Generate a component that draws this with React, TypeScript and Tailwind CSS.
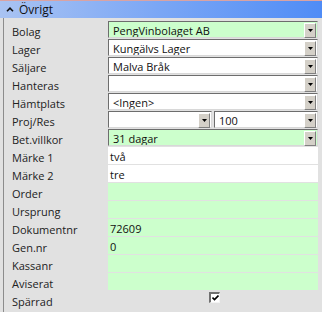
// "Övrigt" property panel, WinForms-style grid.

const font = { fontFamily: '"Open Sans", "Noto Sans", Arial, sans-serif' };

function Arrow() {
  return (
    <div className="w-[12px] h-[15px] my-px mr-px bg-[#d4d0c8] border-t border-l border-t-white border-l-white border-r border-b border-r-[#808080] border-b-[#808080] flex items-center justify-center">
      <svg width="5" height="3" viewBox="0 0 5 3">
        <path d="M0 0h5L2.5 3z" fill="#000" />
      </svg>
    </div>
  );
}

function Combo({ value, green }: { value?: string; green?: boolean }) {
  return (
    <div
      className={`flex-1 h-[17px] flex items-stretch border-t border-l border-t-[#6d6d6d] border-l-[#6d6d6d] border-r border-b border-r-[#d8d8d8] border-b-[#d8d8d8] ${
        green ? "bg-[#ccffcc]" : "bg-white"
      }`}
    >
      <span className="flex-1 pl-[4px] pt-[1px] text-[11px] leading-[16px] text-[#111] truncate">
        {value}
      </span>
      <Arrow />
    </div>
  );
}

function Row({ label, children }: { label: string; children?: React.ReactNode }) {
  return (
    <div className="flex h-[18px] items-start">
      <div className="w-[104px] pl-[8px] pt-[3px] text-[11px] leading-[16px] text-[#222] whitespace-nowrap">
        {label}
      </div>
      <div className="flex-1 flex gap-[2px] mr-[4px]">{children}</div>
    </div>
  );
}

function Plain({ value, green }: { value?: string; green?: boolean }) {
  return (
    <div
      className={`flex-1 h-[17px] pl-[2px] pt-[2px] text-[11px] leading-[15px] text-[#111] overflow-hidden ${
        green ? "bg-[#ccffcc]" : "bg-white"
      }`}
    >
      {value}
    </div>
  );
}

export default function App() {
  return (
    <div className="w-[322px] h-[312px] bg-[#e1e1e1] overflow-hidden" style={font}>
      <div className="h-[18px] border-t border-t-[#d9a3a3] bg-gradient-to-r from-[#a9c3f2] via-[#7aa6f5] to-[#4f8cf6] flex items-center">
        <svg width="8" height="5" viewBox="0 0 8 5" className="ml-[6px] mr-[5px]">
          <path d="M1 4.2 4 1.2 7 4.2" stroke="#111" strokeWidth="1.6" fill="none" />
        </svg>
        <span className="text-[12px] leading-[16px] text-[#111]">Övrigt</span>
      </div>
      <div className="ml-[3px] border-l border-l-[#8c8c8c] pt-[3px] h-full">
        <Row label="Bolag">
          <Combo value="PengVinbolaget AB" green />
        </Row>
        <Row label="Lager">
          <Combo value="Kungälvs Lager" />
        </Row>
        <Row label="Säljare">
          <Combo value="Malva Bråk" />
        </Row>
        <Row label="Hanteras">
          <Combo />
        </Row>
        <Row label="Hämtplats">
          <Combo value="<Ingen>" />
        </Row>
        <Row label="Proj/Res">
          <Combo />
          <Combo value="100" />
        </Row>
        <Row label="Bet.villkor">
          <Combo value="31 dagar" green />
        </Row>
        <Row label="Märke 1">
          <Plain value="två" />
        </Row>
        <Row label="Märke 2">
          <Plain value="tre" />
        </Row>
        <Row label="Order">
          <Plain green />
        </Row>
        <Row label="Ursprung">
          <Plain green />
        </Row>
        <Row label="Dokumentnr">
          <Plain value="72609" green />
        </Row>
        <Row label="Gen.nr">
          <Plain value="0" green />
        </Row>
        <Row label="Kassanr">
          <Plain green />
        </Row>
        <Row label="Aviserat">
          <Plain green />
        </Row>
        <Row label="Spärrad">
          <div className="flex-1 pl-[101px] pt-[1px]">
            <div className="w-[11px] h-[11px] bg-white border-t-2 border-l-2 border-t-[#707070] border-l-[#707070] border-r border-b border-r-[#f4f4f4] border-b-[#f4f4f4] flex items-center justify-center">
              <svg width="7" height="6" viewBox="0 0 7 6">
                <path d="M0.5 2.5 2.5 4.5 6.5 0.5" stroke="#000" strokeWidth="1.6" fill="none" />
              </svg>
            </div>
          </div>
        </Row>
      </div>
    </div>
  );
}
